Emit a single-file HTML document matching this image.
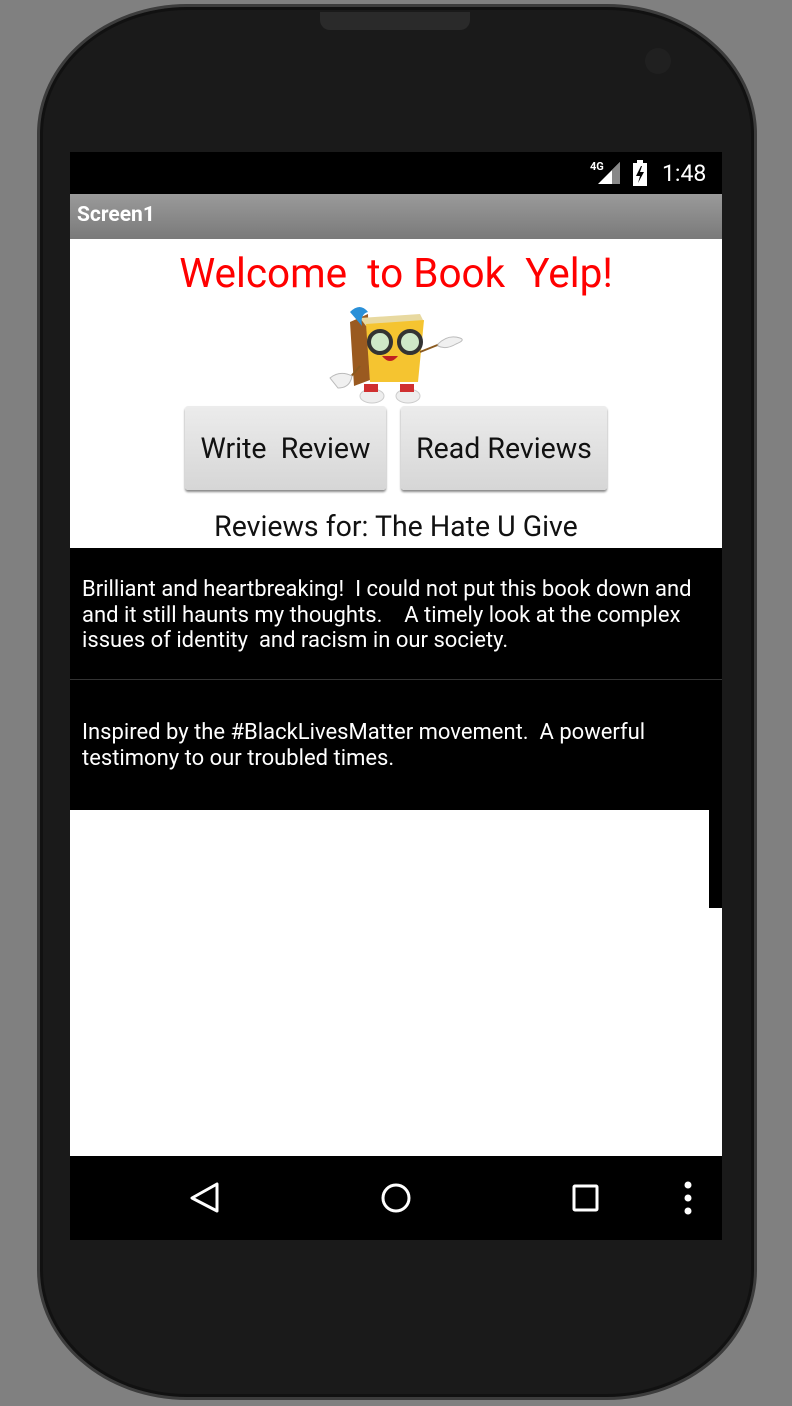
<!DOCTYPE html>
<html><head><style>
body{margin:0;width:792px;height:1406px;background:#808080;position:relative;overflow:hidden;font-family:"Roboto","Liberation Sans",sans-serif}
.phone{position:absolute;left:37px;top:4px;width:720px;height:1396px;border-radius:150px/130px;background:#1a1a1a;border:3px solid #3c3c3c;box-sizing:border-box;box-shadow:inset 0 0 0 3px #111}
.abs{position:absolute}
.btn{position:absolute;top:406px;height:84px;background:linear-gradient(#ececec,#d6d6d6);border-radius:3px;box-shadow:0 2px 2px #888;font-size:28.5px;color:#111;display:flex;align-items:center;justify-content:center}
.rv{color:#fff;font-size:22px;line-height:25.5px;left:82px;width:625px}
</style></head><body>
<div class="phone"></div>
<div class="abs" style="left:320px;top:12px;width:150px;height:18px;background:#2a2a2a;border-radius:0 0 10px 10px"></div>
<div class="abs" style="left:645px;top:48px;width:26px;height:26px;border-radius:50%;background:#202020"></div>
<div class="abs" style="left:70px;top:152px;width:652px;height:42px;background:#000"></div>
<div class="abs" style="left:590px;top:160px;color:#fff;font-size:11px;font-weight:bold">4G</div>
<svg class="abs" style="left:592px;top:160px" width="30" height="26"><polygon points="28,2 28,24 6,24" fill="#fff"/><polygon points="28,2 28,24 20,24 20,10" fill="#888"/></svg>
<svg class="abs" style="left:632px;top:160px" width="18" height="28"><rect x="5" y="0" width="6" height="3" fill="#fff"/><rect x="1" y="3" width="14" height="23" fill="#fff"/><polygon points="9,6 4,16 8,16 6,23 12,12 8,12 10,6" fill="#000"/></svg>
<div class="abs" style="left:662px;top:160px;color:#fff;font-size:23px">1:48</div>
<div class="abs" style="left:70px;top:194px;width:652px;height:45px;background:linear-gradient(#9a9a9a,#7a7a7a)"></div>
<div class="abs" style="left:77px;top:203px;color:#fff;font-size:21px;font-weight:bold">Screen1</div>
<div class="abs" style="left:70px;top:239px;width:652px;height:309px;background:#fff"></div>
<div class="abs" style="left:70px;top:249px;width:652px;text-align:center;color:#f00;font-size:40.5px">Welcome&nbsp; to Book&nbsp; Yelp!</div>
<svg class="abs" style="left:320px;top:300px" width="150" height="106">
<polygon points="30,22 48,14 50,80 34,86" fill="#9a5a20"/>
<polygon points="40,18 100,14 104,22 46,26" fill="#e8d9a0"/>
<polygon points="46,24 104,20 98,82 50,82" fill="#f5c430"/>
<path d="M30 12 q10 -10 18 0 q-8 2 -6 14" fill="#2a90d8"/>
<circle cx="60" cy="42" r="11" fill="#cfe8c8" stroke="#333" stroke-width="4"/>
<circle cx="90" cy="42" r="11" fill="#cfe8c8" stroke="#333" stroke-width="4"/>
<path d="M62 56 q8 10 16 0 z" fill="#c02020"/>
<path d="M100 52 l25 -10" stroke="#8a5a20" stroke-width="2"/>
<path d="M118 44 q10 -10 22 -6 q6 2 -4 6 q-10 6 -18 2z" fill="#f0f0f0" stroke="#bbb"/>
<path d="M40 66 l-12 14" stroke="#8a5a20" stroke-width="2"/>
<path d="M10 78 q10 -8 22 -2 q-2 12 -14 12 z" fill="#f0f0f0" stroke="#bbb"/>
<ellipse cx="52" cy="96" rx="12" ry="7" fill="#eee" stroke="#ccc"/><rect x="44" y="84" width="14" height="8" fill="#d03030"/>
<ellipse cx="88" cy="96" rx="12" ry="7" fill="#eee" stroke="#ccc"/><rect x="80" y="84" width="14" height="8" fill="#d03030"/>
</svg>
<div class="btn" style="left:185px;width:201px">Write&nbsp; Review</div>
<div class="btn" style="left:401px;width:206px">Read Reviews</div>
<div class="abs" style="left:70px;top:510px;width:652px;text-align:center;font-size:28.5px;color:#111">Reviews for: The Hate U Give</div>
<div class="abs" style="left:70px;top:548px;width:652px;height:262px;background:#000"></div>
<div class="abs" style="left:70px;top:679px;width:652px;height:1px;background:#333"></div>
<div class="abs rv" style="top:577px">Brilliant and heartbreaking!&nbsp; I could not put this book down and and it still haunts my thoughts.&nbsp;&nbsp;&nbsp; A timely look at the complex issues of identity&nbsp; and racism in our society.</div>
<div class="abs rv" style="top:720px">Inspired by the #BlackLivesMatter movement.&nbsp; A powerful testimony to our troubled times.</div>
<div class="abs" style="left:70px;top:810px;width:652px;height:346px;background:#fff"></div>
<div class="abs" style="left:709px;top:810px;width:13px;height:98px;background:#000"></div>
<div class="abs" style="left:70px;top:1156px;width:652px;height:84px;background:#000"></div>
<svg class="abs" style="left:70px;top:1156px" width="652" height="84">
<polygon points="147,28 147,55 122,42" fill="none" stroke="#fff" stroke-width="3" stroke-linejoin="round"/>
<ellipse cx="326" cy="42" rx="13" ry="13" fill="none" stroke="#fff" stroke-width="3"/>
<rect x="504" y="30" width="23" height="24" fill="none" stroke="#fff" stroke-width="3" rx="1"/>
<circle cx="618" cy="29" r="3.5" fill="#fff"/><circle cx="618" cy="42" r="3.5" fill="#fff"/><circle cx="618" cy="55" r="3.5" fill="#fff"/>
</svg>
</body></html>
